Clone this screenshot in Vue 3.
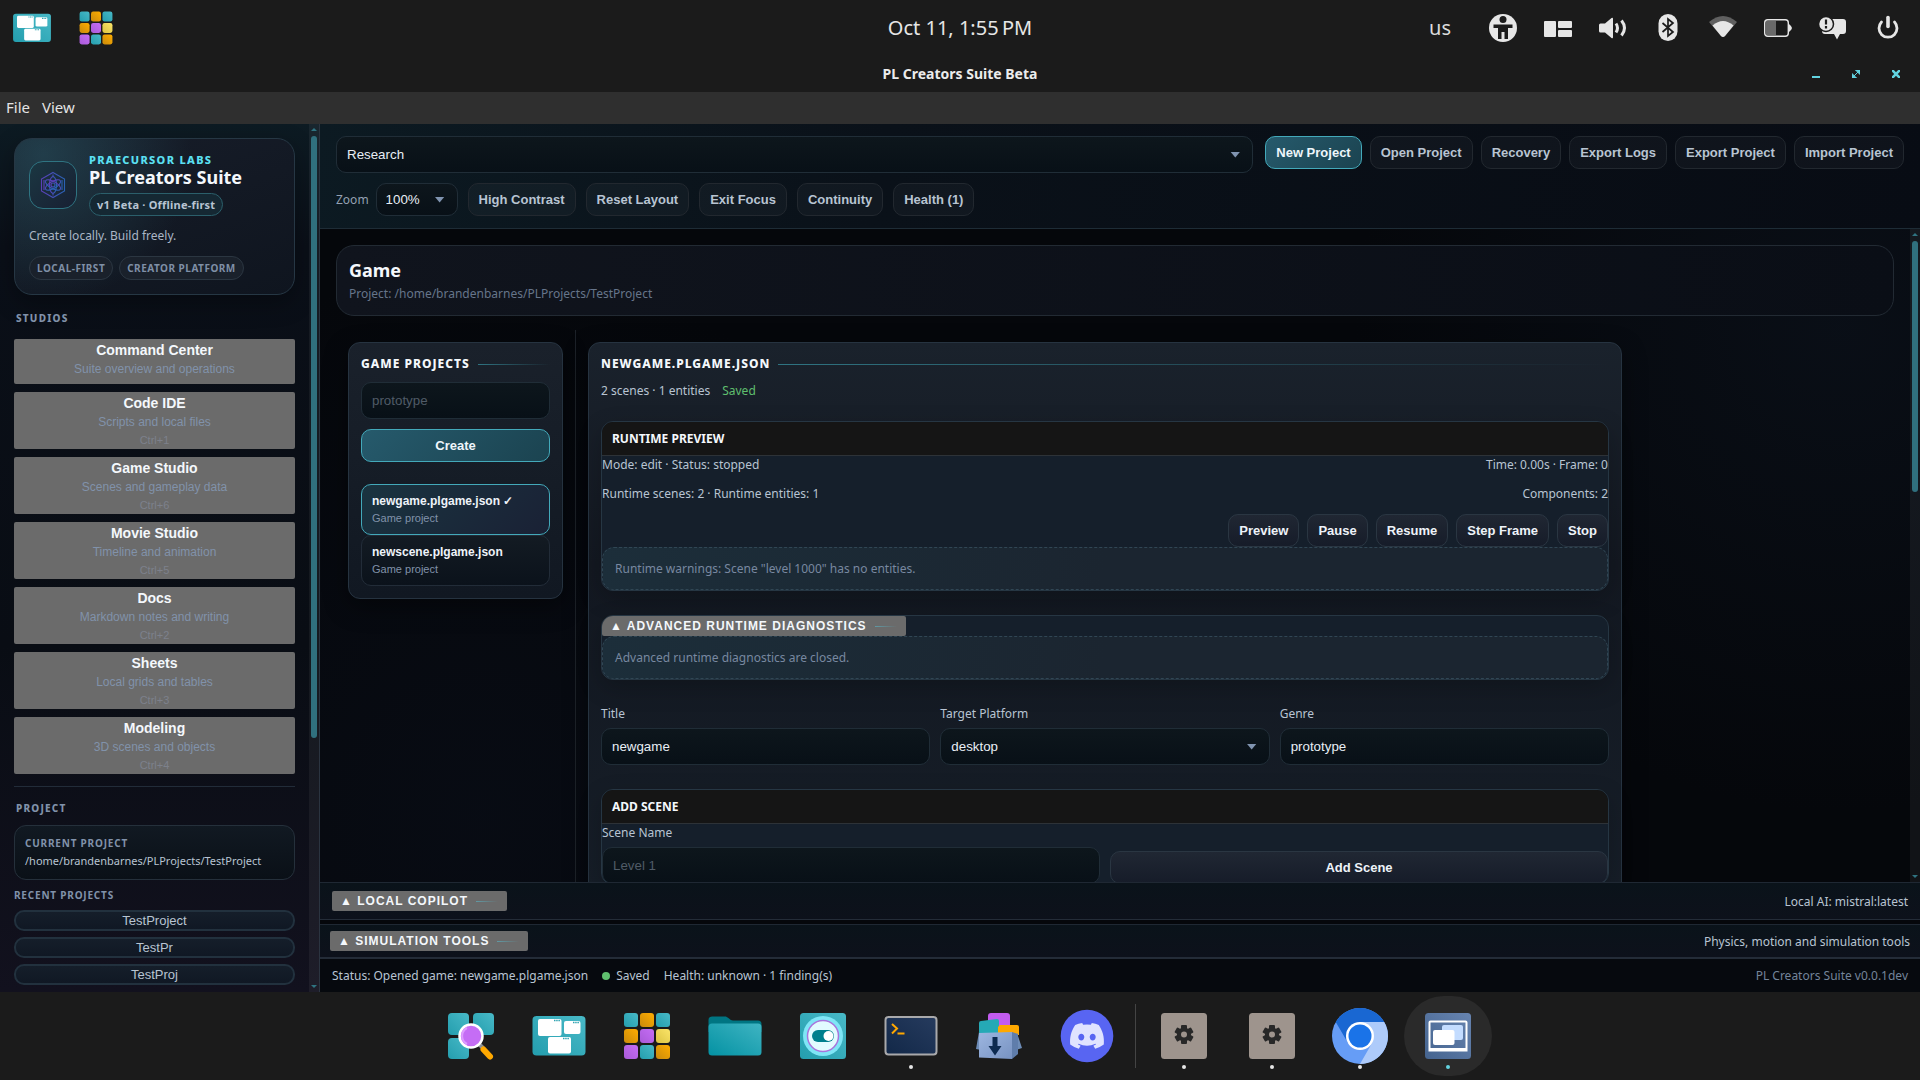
<script setup>
import { ref } from 'vue'

const studios = [
  { name: 'Command Center', note: 'Suite overview and operations' },
  { name: 'Code IDE', note: 'Scripts and local files', key: 'Ctrl+1' },
  { name: 'Game Studio', note: 'Scenes and gameplay data', key: 'Ctrl+6' },
  { name: 'Movie Studio', note: 'Timeline and animation', key: 'Ctrl+5' },
  { name: 'Docs', note: 'Markdown notes and writing', key: 'Ctrl+2' },
  { name: 'Sheets', note: 'Local grids and tables', key: 'Ctrl+3' },
  { name: 'Modeling', note: '3D scenes and objects', key: 'Ctrl+4' },
]
const recent = ['TestProject', 'TestPr', 'TestProj']
const projectActions = ['New Project', 'Open Project', 'Recovery', 'Export Logs', 'Export Project', 'Import Project']
const viewActions = ['High Contrast', 'Reset Layout', 'Exit Focus', 'Continuity', 'Health (1)']
const runtimeActions = ['Preview', 'Pause', 'Resume', 'Step Frame', 'Stop']
const files = ['newgame.plgame.json', 'newscene.plgame.json']
const activeFile = ref(files[0])

const title = ref('newgame')
const platform = ref('desktop')
const genre = ref('prototype')
const newProject = ref('')
const sceneName = ref('')

const dockLeft = [
  { icon: 'search', label: 'Search' },
  { icon: 'windows', label: 'Workspaces' },
  { icon: 'grid', label: 'Applications' },
  { icon: 'folder', label: 'Files' },
  { icon: 'settings', label: 'Settings' },
  { icon: 'terminal', label: 'Terminal', running: true },
  { icon: 'store', label: 'Store' },
  { icon: 'discord', label: 'Discord' },
]
const dockRight = [
  { icon: 'gear', label: 'Service one', running: true },
  { icon: 'gear', label: 'Service two', running: true },
  { icon: 'chromium', label: 'Chromium', running: true },
  { icon: 'suite', label: 'PL Creators Suite', running: true, active: true },
]
const trayIcons = ['access', 'tiling', 'sound', 'bluetooth', 'wifi', 'battery', 'notice', 'power']
</script>

<template>
  <div class="desktop">
    <svg class="defs" width="0" height="0" aria-hidden="true">
      <defs>
        <linearGradient id="teal" x1="1" y1="0" x2="0" y2="1"><stop offset="0" stop-color="#48b9c7" /><stop offset="1" stop-color="#249eae" /></linearGradient>
        <linearGradient id="orange" x1="1" y1="0" x2="0" y2="1"><stop offset="0" stop-color="#ffad00" /><stop offset="1" stop-color="#c98a0c" /></linearGradient>
        <linearGradient id="violet" x1="1" y1="0" x2="0" y2="1"><stop offset="0" stop-color="#c56df5" /><stop offset="1" stop-color="#a95ad8" /></linearGradient>
        <linearGradient id="yellow" x1="1" y1="0" x2="0" y2="1"><stop offset="0" stop-color="#fbe468" /><stop offset="1" stop-color="#dcc443" /></linearGradient>
        <linearGradient id="folderfront" x1="1" y1="0" x2="0" y2="1"><stop offset="0" stop-color="#3fb4c2" /><stop offset="1" stop-color="#0492a3" /></linearGradient>
        <linearGradient id="night" x1="1" y1="0" x2="0" y2="1"><stop offset="0" stop-color="#263b5e" /><stop offset="1" stop-color="#122848" /></linearGradient>
        <linearGradient id="box" x1="0" y1="0" x2="1" y2="1"><stop offset="0" stop-color="#9db6e0" /><stop offset="1" stop-color="#7893c2" /></linearGradient>
        <linearGradient id="steel" x1="1" y1="0" x2="0" y2="1"><stop offset="0" stop-color="#6784b0" /><stop offset="1" stop-color="#45648f" /></linearGradient>
        <linearGradient id="mark" x1="0" y1="0" x2="1" y2="0"><stop offset="0" stop-color="#5b3fb8" /><stop offset="1" stop-color="#2a62b4" /></linearGradient>
      </defs>
      <symbol id="i-search" viewBox="0 0 56 56">
        <g fill="url(#teal)"><rect x="5" y="5" width="21" height="22" rx="4" /><rect x="30" y="5" width="21" height="22" rx="4" /><rect x="5" y="30" width="21" height="21" rx="4" /></g>
        <path d="M36 36l4 4" stroke="#8b8f94" stroke-width="4" />
        <path d="M40.500 41.500l6.500 7" stroke="#ffa800" stroke-width="6" stroke-linecap="round" />
        <circle cx="28" cy="28" r="11.500" fill="#c56df5" stroke="#fff" stroke-width="2.500" />
        <path d="M24 20a9 9 0 0 0 0 16" fill="none" stroke="#dd9bff" stroke-width="2" />
      </symbol>
      <symbol id="i-windows" viewBox="0 0 56 56">
        <rect x="1.500" y="8" width="53" height="39.500" rx="4" fill="url(#teal)" />
        <g fill="#fff"><rect x="7" y="11" width="23.500" height="17" rx="2" /><rect x="33" y="13" width="16.500" height="13" rx="2" /><rect x="17" y="29" width="23" height="16.500" rx="2" /></g>
        <path d="M23 12.500h6M42 14.500h6M32 30.500h6" stroke="#2fa3b2" stroke-width="1.500" stroke-dasharray="1.500 .7" />
      </symbol>
      <symbol id="i-grid" viewBox="0 0 56 56">
        <g fill="url(#teal)"><rect x="5" y="5" width="14" height="14" rx="3" /><rect x="37" y="5" width="14" height="14" rx="3" /><rect x="21" y="37" width="14" height="14" rx="3" /></g>
        <g fill="url(#orange)"><rect x="21" y="5" width="14" height="14" rx="3" /><rect x="5" y="21" width="14" height="14" rx="3" /><rect x="37" y="37" width="14" height="14" rx="3" /></g>
        <g fill="url(#violet)"><rect x="21" y="21" width="14" height="14" rx="3" /><rect x="5" y="37" width="14" height="14" rx="3" /></g>
        <rect x="37" y="21" width="14" height="14" rx="3" fill="url(#yellow)" />
      </symbol>
      <symbol id="i-folder" viewBox="0 0 56 56">
        <path d="M1.500 12a3.500 3.500 0 0 1 3.500-3.500h13c3 0 5 4 8 4h25a3.500 3.500 0 0 1 3.500 3.500v8h-53z" fill="#007582" />
        <rect x="1.500" y="15.500" width="53" height="32" rx="3.500" fill="url(#folderfront)" />
      </symbol>
      <symbol id="i-settings" viewBox="0 0 56 56">
        <rect x="5" y="5" width="46" height="46" rx="3.500" fill="url(#teal)" />
        <circle cx="28" cy="28" r="20" fill="#7fe6f6" />
        <circle cx="28" cy="28" r="15.500" fill="#e2fbff" stroke="#a874dc" stroke-width="1.500" />
        <rect x="17" y="22" width="22" height="12" rx="6" fill="#007f8d" /><circle cx="33.500" cy="28" r="5" fill="#fff" />
      </symbol>
      <symbol id="i-terminal" viewBox="0 0 56 56">
        <rect x="2.500" y="9" width="51" height="37.500" rx="3" fill="url(#night)" stroke="#a9a9ab" stroke-width="2" />
        <path d="M9 16l5 4.500-5 5M14.500 25.500h7" fill="none" stroke="#ffa800" stroke-width="2" />
      </symbol>
      <symbol id="i-store" viewBox="0 0 56 56">
        <rect x="17" y="5" width="22" height="22" rx="3" fill="#c35cf0" />
        <path d="M8 15q0-2 2-2l16-2q2 0 2 2v15H8z" fill="#25a9b5" />
        <path d="M27 19l2-2h17q2 0 2 2v8H27z" fill="#ffa800" />
        <path d="M8 24l-3 17 5 1zM46 25l5 15-6 2z" fill="#6d8cb7" />
        <path d="M8 25l33-1v27l-33-1.500z" fill="url(#box)" /><path d="M41 24l6 2v20l-6 5z" fill="#5f7dab" />
        <path d="M21.500 29h5v9h4l-6.500 9.500-6.500-9.500h4z" fill="#0d2a50" />
      </symbol>
      <symbol id="i-discord" viewBox="0 0 56 56">
        <circle cx="28" cy="28" r="26.300" fill="#5865f2" />
        <path fill="#e0e3ff" d="M39.800 17.100a28 28 0 0 0-7-2.100l-.9 1.800a26 26 0 0 0-7.800 0l-.9-1.800a28 28 0 0 0-7 2.100c-4.400 6.600-5.600 13-5 19.300a28 28 0 0 0 8.600 4.300l1.800-3c-1-.4-1.900-.8-2.800-1.400l.7-.5a20 20 0 0 0 17 0l.7.500c-.9.600-1.800 1-2.800 1.400l1.800 3a28 28 0 0 0 8.600-4.300c.7-7.300-1.200-13.600-5-19.300zM22.300 32.500c-1.700 0-3-1.500-3-3.400s1.300-3.400 3-3.400 3.100 1.500 3 3.400c0 1.900-1.300 3.400-3 3.400zm11.400 0c-1.700 0-3-1.500-3-3.400s1.300-3.400 3-3.400 3.100 1.500 3 3.400c0 1.900-1.300 3.400-3 3.400z" />
      </symbol>
      <symbol id="i-gear" viewBox="0 0 56 56">
        <rect x="5" y="5" width="46" height="46" rx="3.500" fill="#9e948d" />
        <g fill="#282828"><rect x="25" y="17" width="6" height="19" rx="1" /><rect x="25" y="17" width="6" height="19" rx="1" transform="rotate(60 28 26.500)" /><rect x="25" y="17" width="6" height="19" rx="1" transform="rotate(120 28 26.500)" /><circle cx="28" cy="26.500" r="7" /></g>
        <circle cx="28" cy="26.500" r="3" fill="#9e948d" />
      </symbol>
      <symbol id="i-chromium" viewBox="0 0 56 56">
        <circle cx="28" cy="28" r="28" fill="#669df6" />
        <path d="M28 14h24.250A28 28 0 0 0 3.750 14L16 35z" fill="#1967d2" />
        <path d="M28 14h24.250A28 28 0 0 1 28 56l12.100-21z" fill="#aecbfa" />
        <circle cx="28" cy="28" r="14" fill="#fff" /><circle cx="28" cy="28" r="11.500" fill="#1a73e8" />
      </symbol>
      <symbol id="i-suite" viewBox="0 0 56 56">
        <rect x="5" y="5" width="46" height="46" rx="3.500" fill="url(#steel)" />
        <path d="M10.500 12.500h35a2 2 0 0 1 2 2v29h-39v-29a2 2 0 0 1 2-2zm0 2v25.500h35v-25.500z" fill="#fff" fill-rule="evenodd" />
        <rect x="22" y="17" width="21" height="15" rx="2" fill="#c3dcff" /><rect x="13" y="22" width="21.500" height="15" rx="2" fill="#fff" />
      </symbol>
      <symbol id="i-access" viewBox="0 0 28 28">
        <circle cx="14" cy="14" r="14" fill="#e6e6e6" /><circle cx="14" cy="5.500" r="3.500" fill="#1b1b1b" />
        <path d="M4.500 10.500h19v3.500H19v11h-3.500v-7h-3v7H9V14H4.500z" fill="#1b1b1b" />
      </symbol>
      <symbol id="i-tiling" viewBox="0 0 28 28">
        <g fill="#e6e6e6"><rect x="0" y="7" width="12" height="16" rx="1" /><rect x="14" y="7" width="14" height="7" rx="1" /><rect x="14" y="16" width="14" height="7" rx="1" /></g>
      </symbol>
      <symbol id="i-sound" viewBox="0 0 28 28">
        <path d="M0 11q0-1.500 1.500-1.500H6l6.500-5.500q1.500-1 1.500 1v18q0 2-1.500 1L6 18.500H1.500Q0 18.500 0 17z" fill="#e6e6e6" />
        <path d="M17 9.500q3 4.500 0 9M22.500 6.500q6 7.500 0 15" fill="none" stroke="#e6e6e6" stroke-width="3" />
      </symbol>
      <symbol id="i-bluetooth" viewBox="0 0 28 28">
        <rect x="4.500" y="0" width="19" height="27" rx="9.500" fill="#e6e6e6" />
        <path d="M8.500 9l10.500 9-5 4V5l5 4-10.500 9" fill="none" stroke="#1b1b1b" stroke-width="1.700" />
      </symbol>
      <symbol id="i-wifi" viewBox="0 0 28 28">
        <path d="M0 8Q14-4 28 8L16 22q-2 2-4 0z" fill="#606060" />
        <path d="M3.500 11.500q10.500-9 21 0L16 22q-2 2-4 0z" fill="#e6e6e6" />
      </symbol>
      <symbol id="i-battery" viewBox="0 0 28 28">
        <rect x=".7" y="5.700" width="23.600" height="16.600" rx="3" fill="none" stroke="#e6e6e6" stroke-width="1.400" />
        <path d="M2 7h10v14H2z" fill="#6a6a6a" /><path d="M25 10q3 2.500 3 4t-3 4z" fill="#e6e6e6" />
      </symbol>
      <symbol id="i-notice" viewBox="0 0 28 28">
        <path d="M5 5h19a3 3 0 0 1 3 3v9a3 3 0 0 1-3 3h-3l-3 5.500-3-5.500H6a3 3 0 0 1-3-3z" fill="#e6e6e6" />
        <circle cx="7" cy="10" r="7.500" fill="#e6e6e6" stroke="#1b1b1b" stroke-width="1.500" />
        <path d="M7 5.500v5M7 12v2.500" stroke="#1b1b1b" stroke-width="2.200" />
      </symbol>
      <symbol id="i-power" viewBox="0 0 28 28">
        <path d="M14 3.500v9" stroke="#e6e6e6" stroke-width="3.600" stroke-linecap="round" />
        <path d="M7.500 8a9 9 0 1 0 13 0" fill="none" stroke="#e6e6e6" stroke-width="2.800" stroke-linecap="round" />
      </symbol>
    </svg>

    <header class="top-panel">
      <div class="launchers">
        <button aria-label="Workspaces"><svg width="40" height="40"><use href="#i-windows" /></svg></button>
        <button aria-label="Applications"><svg width="40" height="40"><use href="#i-grid" /></svg></button>
      </div>
      <time class="clock">Oct 11, 1:55&#8239;PM</time>
      <div class="tray">
        <span class="layout">us</span>
        <button v-for="t in trayIcons" :key="t" :aria-label="t"><svg width="28" height="28"><use :href="'#i-' + t" /></svg></button>
      </div>
    </header>

    <div class="titlebar">
      <span class="window-title">PL Creators Suite Beta</span>
      <div class="window-controls">
        <button aria-label="Minimize"><svg width="8" height="8"><path d="M0 6h8v2H0z" fill="#62d3e0" /></svg></button>
        <button aria-label="Maximize"><svg width="8" height="8"><path d="M3.500 0H8v4.500zM0 3.500L4.500 8H0zM1 7l6-6" fill="#62d3e0" stroke="#62d3e0" /></svg></button>
        <button aria-label="Close"><svg width="8" height="8"><path d="M0 0l8 8M8 0L0 8" stroke="#62d3e0" stroke-width="2.600" /></svg></button>
      </div>
    </div>

    <nav class="menubar"><button>File</button><button>View</button></nav>

    <div class="app">
      <aside class="sidebar">
        <div class="side-content">
          <section class="brand">
            <div class="brand-head">
              <div class="logo">
                <svg width="26" height="28" viewBox="0 0 26 28" fill="none" stroke="url(#mark)" stroke-width="1.100">
                  <path d="M13 1.500l11.500 6.500v12L13 26.500 1.500 20V8z" />
                  <ellipse cx="13" cy="14" rx="3.500" ry="8.500" /><ellipse cx="13" cy="14" rx="3.500" ry="8.500" transform="rotate(60 13 14)" /><ellipse cx="13" cy="14" rx="3.500" ry="8.500" transform="rotate(120 13 14)" />
                  <circle cx="13" cy="14" r="2" /><path d="M4 9v10M22 9v10M13 3.500v3M13 21.500v3" />
                </svg>
              </div>
              <div>
                <p class="brand-label">PRAECURSOR LABS</p>
                <h1 class="brand-title">PL Creators Suite</h1>
                <span class="brand-pill">v1 Beta · Offline-first</span>
              </div>
            </div>
            <p class="tagline">Create locally. Build freely.</p>
            <div class="chips"><span>LOCAL-FIRST</span><span>CREATOR PLATFORM</span></div>
          </section>

          <h2 class="side-heading">STUDIOS</h2>
          <nav class="studios">
            <button v-for="s in studios" :key="s.name">
              <strong>{{ s.name }}</strong>
              <span>{{ s.note }}</span>
              <small v-if="s.key">{{ s.key }}</small>
            </button>
          </nav>

          <section class="project">
            <h2 class="side-heading">PROJECT</h2>
            <div class="current">
              <h3>CURRENT PROJECT</h3>
              <p>/home/brandenbarnes/PLProjects/TestProject</p>
            </div>
            <h3 class="recent-heading">RECENT PROJECTS</h3>
            <div class="recent"><button v-for="r in recent" :key="r">{{ r }}</button></div>
          </section>
        </div>
        <div class="track"><i class="arrow up"></i><i class="thumb side-thumb"></i><i class="arrow down"></i></div>
      </aside>

      <div class="workspace">
        <header class="toolbar">
          <div class="tool-row">
            <span class="select wide"><select aria-label="Workspace"><option>Research</option></select></span>
            <div class="actions">
              <button v-for="(a, i) in projectActions" :key="a" class="btn" :class="i === 0 ? 'primary' : 'ghost'">{{ a }}</button>
            </div>
          </div>
          <div class="tool-row second">
            <label for="zoom">Zoom</label>
            <span class="select zoom"><select id="zoom"><option>100%</option></select></span>
            <button v-for="a in viewActions" :key="a" class="btn ghost">{{ a }}</button>
          </div>
        </header>

        <div class="scroller">
          <main class="content">
            <section class="page-head">
              <h2>Game</h2>
              <p>Project: /home/brandenbarnes/PLProjects/TestProject</p>
            </section>

            <div class="columns">
              <div class="list-column">
                <section class="card">
                  <h3 class="card-title">GAME PROJECTS</h3>
                  <input v-model="newProject" class="field create-name" placeholder="prototype" aria-label="Project name" />
                  <button class="btn primary create">Create</button>
                  <div class="files">
                    <button v-for="f in files" :key="f" :class="{ active: f === activeFile }" @click="activeFile = f">
                      <strong>{{ f }}<template v-if="f === activeFile"> ✓</template></strong>
                      <span>Game project</span>
                    </button>
                  </div>
                </section>
              </div>

              <div class="editor-column">
                <section class="card">
                  <h3 class="card-title">NEWGAME.PLGAME.JSON</h3>
                  <p class="summary"><span>2 scenes · 1 entities</span><span class="saved">Saved</span></p>

                  <section class="panel">
                    <h4>RUNTIME PREVIEW</h4>
                    <div class="pair"><span>Mode: edit · Status: stopped</span><span>Time: 0.00s · Frame: 0</span></div>
                    <div class="pair spaced"><span>Runtime scenes: 2 · Runtime entities: 1</span><span>Components: 2</span></div>
                    <div class="runtime-actions"><button v-for="a in runtimeActions" :key="a" class="btn solid">{{ a }}</button></div>
                    <p class="note">Runtime warnings: Scene "level 1000" has no entities.</p>
                  </section>

                  <section class="panel">
                    <button class="toggle">▲ ADVANCED RUNTIME DIAGNOSTICS</button>
                    <p class="note">Advanced runtime diagnostics are closed.</p>
                  </section>

                  <div class="fields">
                    <div><label for="f-title">Title</label><input id="f-title" v-model="title" class="field" /></div>
                    <div>
                      <label for="f-platform">Target Platform</label>
                      <span class="select"><select id="f-platform" v-model="platform"><option>desktop</option></select></span>
                    </div>
                    <div><label for="f-genre">Genre</label><input id="f-genre" v-model="genre" class="field" /></div>
                  </div>

                  <section class="panel">
                    <h4>ADD SCENE</h4>
                    <div class="scene-form">
                      <div><label for="f-scene">Scene Name</label><input id="f-scene" v-model="sceneName" class="field" placeholder="Level 1" /></div>
                      <button class="btn solid">Add Scene</button>
                    </div>
                  </section>
                </section>
              </div>
            </div>
          </main>
          <div class="track main-track"><i class="arrow up"></i><i class="thumb main-thumb"></i><i class="arrow down"></i></div>
        </div>

        <section class="drawer copilot"><button class="toggle">▲ LOCAL COPILOT</button><span>Local AI: mistral:latest</span></section>
        <section class="drawer simulation"><button class="toggle">▲ SIMULATION TOOLS</button><span>Physics, motion and simulation tools</span></section>
        <footer class="status">
          <span>Status: Opened game: newgame.plgame.json</span>
          <span class="state"><i></i>Saved</span>
          <span>Health: unknown · 1 finding(s)</span>
          <span class="version">PL Creators Suite v0.0.1dev</span>
        </footer>
      </div>
    </div>

    <footer class="dock">
      <button v-for="d in dockLeft" :key="d.label" :aria-label="d.label" :class="{ running: d.running }">
        <svg width="56" height="56"><use :href="'#i-' + d.icon" /></svg>
      </button>
      <i class="divider"></i>
      <button v-for="d in dockRight" :key="d.label" :aria-label="d.label" :class="{ running: d.running, active: d.active }">
        <svg width="56" height="56"><use :href="'#i-' + d.icon" /></svg>
      </button>
    </footer>
  </div>
</template>

<style>
body {
  background: #1b1b1b;
}
</style>

<style scoped>
* {
  box-sizing: border-box;
  margin: 0;
}
.desktop {
  display: flex;
  flex-direction: column;
  height: 100vh;
  overflow: hidden;
  background: #1b1b1b;
  color: #b8c4d2;
  font-family: 'Noto Sans', sans-serif;
  font-size: 12px;
  line-height: 18px;
}
.defs {
  position: absolute;
}
button {
  border: 0;
  background: none;
  color: inherit;
  font-family: 'Liberation Sans', sans-serif;
  font-size: 13px;
  padding: 0;
}
svg {
  display: block;
}

/* desktop chrome */
.top-panel {
  display: grid;
  grid-template-columns: 1fr auto 1fr;
  align-items: center;
  height: 56px;
  flex: none;
}
.launchers {
  display: flex;
  gap: 24px;
  padding-left: 12px;
}
.clock {
  font-size: 20px;
  line-height: 24px;
  color: #e6e6e6;
}
.tray {
  display: flex;
  justify-content: flex-end;
  align-items: center;
  padding-right: 5px;
}
.tray button {
  display: flex;
  justify-content: center;
  width: 55px;
}
.layout {
  font-size: 20px;
  color: #dcdcdc;
  margin-right: 24px;
}
.titlebar {
  display: grid;
  grid-template-columns: 1fr auto 1fr;
  align-items: center;
  height: 36px;
  flex: none;
}
.window-title {
  grid-column: 2;
  font-size: 14px;
  font-weight: 700;
  color: #ececec;
}
.window-controls {
  display: flex;
  justify-content: flex-end;
  padding-right: 4px;
}
.window-controls button {
  display: flex;
  justify-content: center;
  width: 40px;
}
.menubar {
  display: flex;
  align-items: center;
  gap: 12px;
  height: 32px;
  flex: none;
  padding: 0 6px 2px;
  background: #2f2f2f;
}
.menubar button {
  font-family: inherit;
  font-size: 15px;
  color: #e4e4e4;
}

/* application frame */
.app {
  display: flex;
  flex: 1;
  min-height: 0;
  background: #05070b;
}
.sidebar {
  display: flex;
  flex: none;
  width: 320px;
  border-right: 1px solid #2b3440;
  background: linear-gradient(180deg, #0d1b23 0, #0a0f18 14%, #090d14 60%, #12111e 100%);
}
.side-content {
  flex: 1;
  min-width: 0;
  overflow: hidden;
  padding: 14px 14px 0;
}
.track {
  display: flex;
  flex-direction: column;
  align-items: center;
  flex: none;
  width: 10px;
  background: rgba(255, 255, 255, 0.05);
}
.arrow {
  width: 6px;
  height: 3px;
  background: #2f7482;
}
.arrow.up {
  clip-path: polygon(50% 0, 100% 100%, 0 100%);
  margin: 4px 0 5px;
}
.arrow.down {
  clip-path: polygon(0 0, 100% 0, 50% 100%);
  margin: auto 0 4px;
}
.thumb {
  width: 6px;
  border-radius: 3px;
  background: #30707e;
}
.side-thumb {
  height: 69.4%;
}
.main-thumb {
  height: 38.4%;
}

.brand {
  padding: 14px;
  border: 1px solid #263744;
  border-radius: 18px;
  background: radial-gradient(circle at 10% 10%, rgba(50, 110, 125, 0.4), transparent 52%), linear-gradient(160deg, #171d29, #0f151f);
  box-shadow: 0 8px 24px rgba(0, 0, 0, 0.3);
}
.brand-head {
  display: flex;
  align-items: center;
  gap: 12px;
}
.logo {
  display: grid;
  place-items: center;
  width: 48px;
  height: 48px;
  border: 1px solid #2f7482;
  border-radius: 14px;
  background: linear-gradient(135deg, #1b3742, #182033);
}
.brand-label {
  font-size: 11px;
  line-height: 14px;
  font-weight: 800;
  letter-spacing: 0.12em;
  color: #5be0f2;
}
.brand-title {
  font-size: 18px;
  line-height: 20px;
  font-weight: 700;
  color: #f4f8fc;
}
.brand-pill {
  display: inline-block;
  margin-top: 6px;
  padding: 0 7px;
  border: 1px solid #2b5f6b;
  border-radius: 12px;
  background: #152833;
  font-size: 11px;
  line-height: 21px;
  font-weight: 700;
  letter-spacing: 0.02em;
  vertical-align: top;
}
.tagline {
  margin-top: 10px;
  line-height: 20px;
  color: #aab6c5;
}
.chips {
  display: flex;
  gap: 6px;
  margin-top: 10px;
}
.chips span {
  padding: 0 7px;
  border: 1px solid #2b3641;
  border-radius: 12px;
  background: #1a212b;
  font-size: 10px;
  line-height: 22px;
  font-weight: 700;
  letter-spacing: 0.05em;
  color: #7f8fa6;
}
.side-heading {
  margin: 15px 2px 13px;
  font-size: 10px;
  line-height: 16px;
  font-weight: 800;
  letter-spacing: 0.12em;
  color: #8192aa;
}
.studios {
  display: flex;
  flex-direction: column;
  gap: 8px;
}
.studios button {
  display: flex;
  flex-direction: column;
  align-items: center;
  justify-content: flex-start;
  min-height: 45px;
  padding-top: 2px;
  border-radius: 2px;
  background: #6b6b6b;
}
.studios strong {
  font-size: 14px;
  line-height: 19px;
  color: #f4f8fc;
}
.studios span {
  font-size: 12px;
  line-height: 19px;
  color: #8192aa;
}
.studios small {
  font-size: 11px;
  line-height: 17px;
  color: #7d818b;
}
.project {
  margin-top: 12px;
  border-top: 1px solid #222c39;
}
.project .side-heading {
  margin: 13px 2px 9px;
}
.current {
  padding: 9px 10px;
  border: 1px solid #25303b;
  border-radius: 12px;
  background: linear-gradient(180deg, #111922, #0a1017);
}
.current h3,
.recent-heading {
  font-size: 10px;
  line-height: 16px;
  font-weight: 700;
  letter-spacing: 0.08em;
  color: #8192aa;
}
.current p {
  margin-top: 1px;
  font-size: 11px;
}
.recent-heading {
  margin: 7px 0;
}
.recent {
  display: flex;
  flex-direction: column;
  gap: 6px;
}
.recent button {
  height: 21px;
  border: 2px solid #22313e;
  border-radius: 10px;
  background: linear-gradient(180deg, #151e2a, #101824);
  line-height: 15px;
}

/* controls */
.workspace {
  display: flex;
  flex-direction: column;
  flex: 1;
  min-width: 0;
}
.btn {
  height: 33px;
  padding: 0 10px;
  border: 1px solid #22282f;
  border-radius: 10px;
  font-weight: 700;
  white-space: nowrap;
}
.ghost {
  background: rgba(255, 255, 255, 0.03);
}
.primary {
  border-color: #43a9ba;
  background: linear-gradient(135deg, #265a6c, #1b4350);
  color: #eef6fb;
}
.solid {
  border-color: #2a3642;
  background: linear-gradient(180deg, #202733, #161c29);
  color: #eef3f9;
}
.field,
.select select {
  display: block;
  width: 100%;
  height: 37px;
  padding: 0 10px;
  border: 1px solid #202d37;
  border-radius: 10px;
  background: linear-gradient(180deg, #0d161c, #081017);
  color: #e8eef5;
  font-family: 'Liberation Sans', sans-serif;
  appearance: none;
}
.field::placeholder {
  color: #505b67;
}
.select {
  position: relative;
  display: block;
}
.select::after {
  content: '';
  position: absolute;
  right: 13px;
  top: 50%;
  width: 10px;
  height: 6px;
  margin-top: -3px;
  background: #8094b0;
  clip-path: polygon(0 0, 100% 0, 50% 100%);
  pointer-events: none;
}
.toolbar {
  padding: 12px 16px;
  border-bottom: 1px solid #1e2c36;
  background: linear-gradient(100deg, #0c1a22 0, #0a1119 35%, #080c14 100%);
}
.tool-row {
  display: flex;
  align-items: flex-start;
  gap: 12px;
}
.wide {
  flex: 1;
}
.actions {
  display: flex;
  gap: 8px;
}
.second {
  align-items: center;
  gap: 10px;
  margin-top: 10px;
}
.second label {
  margin-right: -3px;
  color: #94a1b2;
}
.zoom {
  width: 82px;
}
.zoom select {
  height: 33px;
  padding: 0 9px;
}

/* page */
.scroller {
  display: flex;
  flex: 1;
  min-height: 0;
  background:
    radial-gradient(circle at 95% 15%, rgba(14, 22, 34, 0.5), transparent 30%),
    radial-gradient(circle at 10% 90%, rgba(12, 18, 32, 0.4), transparent 35%),
    #05070b;
}
.content {
  flex: 1;
  min-width: 0;
  padding: 16px;
  overflow: hidden;
}
.page-head {
  padding: 12px;
  height: 71px;
  border: 1px solid #222a33;
  border-radius: 18px;
  background: linear-gradient(90deg, #10141d, #0a0e16);
}
.page-head h2 {
  font-size: 18px;
  line-height: 24px;
  color: #f4f8fc;
}
.page-head p {
  margin-top: 3px;
  color: #66758a;
}
.columns {
  display: grid;
  grid-template-columns: 240px 1fr 260px;
  margin-top: 14px;
}
.list-column {
  padding: 12px;
  border-right: 1px solid #1d2229;
  min-height: 560px;
}
.editor-column {
  padding: 12px;
}
.card {
  padding: 12px;
  border: 1px solid #263340;
  border-radius: 12px;
  background: linear-gradient(180deg, #1a212b, #111822);
  box-shadow: 0 8px 24px rgba(0, 0, 0, 0.4);
}
.editor-column .card {
  background: linear-gradient(180deg, #1a222c, #131821 40%, #161e28);
}
.card-title {
  display: flex;
  align-items: center;
  gap: 8px;
  font-size: 12px;
  line-height: 18px;
  font-weight: 800;
  letter-spacing: 1px;
  color: #f4f8fc;
}
.card-title::after {
  content: '';
  flex: 1;
  height: 1px;
  background: linear-gradient(90deg, #2f7482, transparent);
}
.create-name {
  margin-top: 9px;
}
.create {
  width: 100%;
  margin: 10px 0 22px;
}
.files button {
  display: flex;
  flex-direction: column;
  justify-content: center;
  width: 100%;
  height: 51px;
  padding: 0 10px 2px;
  border: 1px solid #222c38;
  border-radius: 10px;
  background: linear-gradient(180deg, #131b23, #0b121b);
  text-align: left;
}
.files .active {
  border-color: #43a9ba;
  background: linear-gradient(135deg, #1a3440, #1a2135);
}
.files strong {
  font-size: 12px;
  line-height: 18px;
  color: #eef3f9;
}
.files span {
  font-size: 11px;
  line-height: 16px;
  color: #8192aa;
}
.summary {
  display: flex;
  gap: 12px;
  margin-top: 9px;
}
.saved {
  color: #5fbf6e;
}
.panel {
  margin-top: 24px;
  border: 1px solid #263643;
  border-radius: 12px;
  background: #151f2b;
  overflow: hidden;
  box-shadow: 0 8px 24px rgba(0, 0, 0, 0.2);
}
.summary + .panel {
  margin-top: 21px;
}
.panel h4 {
  padding: 0 10px;
  border-bottom: 1px solid #2d3237;
  background: #151515;
  font-size: 12px;
  line-height: 33px;
  font-weight: 700;
  color: #f4f8fc;
}
.pair {
  display: flex;
  justify-content: space-between;
}
.spaced {
  margin: 11px 0;
}
.runtime-actions {
  display: flex;
  justify-content: flex-end;
  gap: 8px;
}
.note {
  padding: 12px;
  border: 1px dashed #304654;
  border-radius: 12px;
  background: linear-gradient(100deg, #1c2e3a, #1b2530 50%);
  line-height: 17px;
  color: #7888a0;
}
.toggle {
  display: flex;
  align-items: center;
  gap: 8px;
  height: 20px;
  padding: 0 9px 0 8px;
  border-radius: 2px;
  background: #6b6b6b;
  font-size: 12px;
  font-weight: 700;
  letter-spacing: 1px;
  color: #f4f8fc;
}
.toggle::after {
  content: '';
  width: 22px;
  height: 1px;
  background: linear-gradient(90deg, #5f9aa5, transparent);
}
.fields {
  display: grid;
  grid-template-columns: repeat(3, 1fr);
  gap: 10px;
  margin-top: 25px;
}
.fields label,
.scene-form label {
  display: block;
  margin-bottom: 5px;
}
.scene-form {
  display: grid;
  grid-template-columns: 1fr 1fr;
  align-items: end;
  gap: 10px;
}

/* bottom drawers */
.drawer {
  display: flex;
  align-items: center;
  justify-content: space-between;
  flex: none;
  border-top: 1px solid #1f2833;
  border-bottom: 1px solid #242c38;
  background: linear-gradient(180deg, #0a131a, #0d111b);
}
.drawer span {
  padding-top: 2px;
}
.copilot {
  padding: 8px 12px;
}
.simulation {
  margin-top: 4px;
  padding: 6px 10px;
  border-bottom-width: 2px;
}
.status {
  display: flex;
  align-items: center;
  gap: 14px;
  flex: none;
  height: 33px;
  padding: 0 12px;
  background: #06090e;
}
.state {
  display: flex;
  align-items: center;
  gap: 6px;
}
.state i {
  width: 8px;
  height: 8px;
  border-radius: 50%;
  background: #5fbf6e;
}
.version {
  margin-left: auto;
  color: #74849a;
}

/* dock */
.dock {
  display: flex;
  justify-content: center;
  align-items: center;
  height: 88px;
  flex: none;
  padding-right: 2px;
}
.dock button {
  position: relative;
  display: grid;
  place-items: center;
  width: 88px;
  height: 80px;
}
.dock .running::after {
  content: '';
  position: absolute;
  left: 42px;
  bottom: 7px;
  width: 4px;
  height: 4px;
  border-radius: 2px;
  background: #e6e6e6;
}
.dock .active {
  border-radius: 40px;
  background: #2a2a2a;
}
.dock .active::after {
  background: #62d3e0;
}
.divider {
  width: 1px;
  height: 64px;
  margin: 0 4px;
  background: #444;
}
</style>
